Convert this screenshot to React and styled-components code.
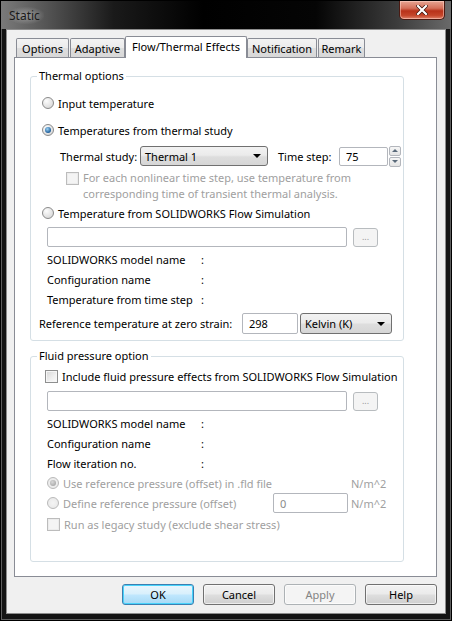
import styled, { createGlobalStyle, css } from "styled-components";

const GlobalStyle = createGlobalStyle`
  html, body { margin: 0; padding: 0; }
  body {
    font-family: "Noto Sans", "Open Sans", sans-serif;
    font-size: 11px;
    color: #000;
  }
  #root { width: 452px; height: 621px; }
`;

const Window = styled.div`
  width: 452px;
  height: 621px;
  box-sizing: border-box;
  display: flex;
  flex-direction: column;
  background: #141414;
  border: 1px solid #000;
  box-shadow: inset 0 0 0 1px #5e5e5e;
`;

const TitleBar = styled.div`
  height: 28px;
  display: flex;
  align-items: flex-start;
  justify-content: space-between;
  background: linear-gradient(
    90deg,
    #7a7a7a 0%,
    #555 10%,
    #1a1a1a 25%,
    #000 45%,
    #050505 70%,
    #3c3c3c 88%,
    #6a6a6a 100%
  );
`;

const Title = styled.span`
  margin: 6px 0 0 7px;
  padding: 0 4px 0 1px;
  font-size: 12px;
  color: #1a1a1a;
  border-radius: 6px;
  background: radial-gradient(ellipse at center, rgba(200, 200, 200, 0.55) 0%, rgba(160, 160, 160, 0) 75%);
`;

const CloseButton = styled.div`
  width: 46px;
  height: 19px;
  margin-right: 6px;
  box-sizing: border-box;
  display: flex;
  align-items: center;
  justify-content: center;
  border: 1px solid #4a1a12;
  border-top: none;
  border-radius: 0 0 5px 5px;
  background: linear-gradient(#e7a593 0%, #d4705a 40%, #b8321a 55%, #c4452a 80%, #e0826a 100%);
  box-shadow: inset 0 0 0 1px rgba(255, 220, 210, 0.5);
`;

const Client = styled.div`
  flex: 1;
  margin: 0 5px 6px 5px;
  border: 1px solid #8d8d8d;
  background: #f0f0f0;
  padding: 6px 8px 8px 7px;
  display: flex;
  flex-direction: column;
`;

const TabStrip = styled.div`
  height: 21px;
  display: flex;
  align-items: flex-end;
  padding-left: 2px;
  position: relative;
  z-index: 1;
`;

const Tab = styled.div`
  box-sizing: border-box;
  width: ${(p) => p.$w}px;
  height: 19px;
  margin-right: 1px;
  display: flex;
  align-items: center;
  justify-content: center;
  border: 1px solid #898c95;
  border-bottom: none;
  border-radius: 2px 2px 0 0;
  background: linear-gradient(#f3f3f3 0%, #ebebeb 50%, #dedede 51%, #d8d8d8 100%);
  ${(p) =>
    p.$active &&
    css`
      height: 22px;
      margin-bottom: -1px;
      margin-left: -1px;
      margin-right: 0;
      background: #fff;
      padding-bottom: 3px;
    `}
`;

const Panel = styled.div`
  box-sizing: border-box;
  height: 520px;
  width: 423px;
  border: 1px solid #898c95;
  background: #fff;
  padding: 11px 32px 0 15px;
  display: flex;
  flex-direction: column;
  gap: 8px;
`;

const Group = styled.fieldset`
  margin: 0;
  padding: 0 0 ${(p) => p.$pb}px 0;
  border: 1px solid #d5dfe5;
  border-radius: 3px;
  display: flex;
  flex-direction: column;
  min-width: 0;
`;

const Legend = styled.legend`
  margin-left: 6px;
  padding: 0 2px;
  line-height: 14px;
  font-size: 11px;
`;

const Row = styled.div`
  height: ${(p) => p.$h || 20}px;
  margin-top: ${(p) => p.$mt || 0}px;
  padding-left: ${(p) => p.$pl || 0}px;
  display: flex;
  align-items: center;
  color: ${(p) => (p.$disabled ? "#a0a0a0" : "#000")};
  white-space: nowrap;
`;

const Label = styled.span`
  width: ${(p) => (p.$w ? `${p.$w}px` : "auto")};
  margin-left: ${(p) => p.$ml || 0}px;
  flex: none;
`;

const RadioDot = styled.span`
  box-sizing: border-box;
  width: 12px;
  height: 12px;
  margin-right: 4px;
  flex: none;
  border-radius: 50%;
  border: 1px solid ${(p) => (p.$disabled ? "#b9b9b9" : "#8a8a8a")};
  background: ${(p) =>
    p.$disabled
      ? "radial-gradient(circle at 50% 50%, #f4f4f4 0%, #e6e6e6 100%)"
      : "radial-gradient(circle at 35% 30%, #fdfdfd 0%, #e2e2e2 60%, #cfcfcf 100%)"};
  display: flex;
  align-items: center;
  justify-content: center;
  &::after {
    content: "";
    display: ${(p) => (p.$checked ? "block" : "none")};
    width: 6px;
    height: 6px;
    border-radius: 50%;
    background: ${(p) =>
      p.$disabled
        ? "radial-gradient(circle at 40% 35%, #d8d8d8, #9a9a9a)"
        : "radial-gradient(circle at 40% 35%, #9fd4f5, #1c5d9a 70%, #123f6e)"};
  }
`;

const Check = styled.span`
  box-sizing: border-box;
  width: 13px;
  height: 13px;
  margin-right: 4px;
  margin-top: ${(p) => p.$mt || 0}px;
  flex: none;
  border: 1px solid ${(p) => (p.$disabled ? "#bcbcbc" : "#8e8f8f")};
  background: ${(p) =>
    p.$disabled ? "#f4f4f4" : "linear-gradient(135deg, #d6d6d6 0%, #f0f0f0 60%, #fafafa 100%)"};
  box-shadow: inset 0 0 0 1px ${(p) => (p.$disabled ? "#ececec" : "#f6f6f6")};
`;

const Input = styled.div`
  box-sizing: border-box;
  width: ${(p) => p.$w}px;
  height: ${(p) => p.$h || 20}px;
  flex: none;
  border: 1px solid #b3b6bc;
  border-radius: 2px;
  background: #fff;
  padding-left: 6px;
  display: flex;
  align-items: center;
  color: ${(p) => (p.$disabled ? "#8a8a8a" : "#000")};
`;

const Browse = styled.div`
  box-sizing: border-box;
  width: 25px;
  height: 19px;
  margin-left: 6px;
  border: 1px solid #b8bcbf;
  border-radius: 3px;
  background: #f4f4f4;
  color: #9a9a9a;
  font-size: 9px;
  display: flex;
  align-items: center;
  justify-content: center;
  padding-bottom: 2px;
`;

const Select = styled.div`
  box-sizing: border-box;
  width: ${(p) => p.$w}px;
  height: ${(p) => p.$h || 20}px;
  flex: none;
  margin-left: ${(p) => p.$ml || 0}px;
  border: 1px solid #707070;
  border-radius: 3px;
  background: linear-gradient(#f2f2f2 0%, #ebebeb 45%, #dddddd 55%, #d6d6d6 100%);
  display: flex;
  align-items: center;
  justify-content: space-between;
  padding: 0 6px 0 4px;
`;

const Arrow = styled.span`
  width: 0;
  height: 0;
  border-left: 4px solid transparent;
  border-right: 4px solid transparent;
  border-top: 4px solid #000;
`;

const Spinner = styled.div`
  display: flex;
  flex-direction: column;
  gap: 1px;
  margin-left: 1px;
`;

const SpinBtn = styled.div`
  box-sizing: border-box;
  width: 12px;
  height: 10px;
  border: 1px solid #b3b6bc;
  border-radius: 2px;
  background: linear-gradient(#f6f6f6, #e4e4e4);
  display: flex;
  align-items: center;
  justify-content: center;
  &::after {
    content: "";
    border-left: 3px solid transparent;
    border-right: 3px solid transparent;
    ${(p) =>
      p.$up ? "border-bottom: 3px solid #5a6a7a;" : "border-top: 3px solid #5a6a7a;"}
  }
`;

const Wrap = styled.div`
  padding-left: ${(p) => p.$pl}px;
  margin-top: ${(p) => p.$mt}px;
  display: flex;
  align-items: flex-start;
  color: #a0a0a0;
  line-height: 16px;
`;

const Unit = styled.span`
  margin-left: ${(p) => p.$ml}px;
  color: #a0a0a0;
`;

const ButtonBar = styled.div`
  margin-top: 7px;
  display: flex;
  justify-content: flex-end;
  gap: 9px;
`;

const Button = styled.div`
  box-sizing: border-box;
  width: 72px;
  height: 21px;
  display: flex;
  align-items: center;
  justify-content: center;
  border-radius: 3px;
  border: 1px solid ${(p) => (p.$primary ? "#3c7fb1" : p.$disabled ? "#adb2b5" : "#707070")};
  color: ${(p) => (p.$disabled ? "#838383" : "#000")};
  background: ${(p) =>
    p.$primary
      ? "linear-gradient(#eaf6fd 0%, #d9f0fc 45%, #bee6fd 55%, #a7d9f5 100%)"
      : p.$disabled
      ? "#f4f4f4"
      : "linear-gradient(#f2f2f2 0%, #ebebeb 45%, #dddddd 55%, #cfcfcf 100%)"};
  box-shadow: ${(p) => (p.$primary ? "inset 0 0 0 1px #48d3fb" : "inset 0 0 0 1px rgba(255,255,255,0.6)")};
`;

const tabs = [
  { label: "Options", w: 53 },
  { label: "Adaptive", w: 55 },
  { label: "Flow/Thermal Effects", w: 122, active: true },
  { label: "Notification", w: 70 },
  { label: "Remark", w: 47 },
];

const Radio = ({ checked, disabled, children, pl, mt }) => (
  <Row $pl={pl} $mt={mt} $disabled={disabled}>
    <RadioDot $checked={checked} $disabled={disabled} />
    {children}
  </Row>
);

const InfoRow = ({ label, mt }) => (
  <Row $pl={16} $mt={mt}>
    <Label $w={154}>{label}</Label>
    <span>:</span>
  </Row>
);

const App = () => {
  return (
    <>
      <GlobalStyle />
      <Window>
        <TitleBar>
          <Title>Static</Title>
          <CloseButton>
            <svg width="12" height="10" viewBox="0 0 12 10">
              <path d="M2 1 L10 9 M10 1 L2 9" stroke="#3a1008" strokeWidth="3.6" strokeLinecap="square" />
              <path d="M2 1 L10 9 M10 1 L2 9" stroke="#fff" strokeWidth="2.2" strokeLinecap="square" />
            </svg>
          </CloseButton>
        </TitleBar>
        <Client>
          <TabStrip>
            {tabs.map((t) => (
              <Tab key={t.label} $w={t.w} $active={t.active}>
                {t.label}
              </Tab>
            ))}
          </TabStrip>
          <Panel>
            <Group $pb={6}>
              <Legend>Thermal options</Legend>
              <Radio pl={11} mt={10}>Input temperature</Radio>
              <Radio pl={11} mt={7} checked>
                Temperatures from thermal study
              </Radio>
              <Row $pl={29} $mt={6}>
                <Label $w={80}>Thermal study:</Label>
                <Select $w={128}>
                  <span>Thermal 1</span>
                  <Arrow />
                </Select>
                <Label $w={61} $ml={10}>Time step:</Label>
                <Input $w={49} $h={19}>75</Input>
                <Spinner>
                  <SpinBtn $up />
                  <SpinBtn />
                </Spinner>
              </Row>
              <Wrap $pl={35} $mt={4}>
                <Check $disabled $mt={2} />
                <span>
                  For each nonlinear time step, use temperature from
                  <br />
                  corresponding time of transient thermal analysis.
                </span>
              </Wrap>
              <Radio pl={11} mt={1}>
                Temperature from SOLIDWORKS Flow Simulation
              </Radio>
              <Row $pl={16} $mt={4}>
                <Input $w={300} />
                <Browse>...</Browse>
              </Row>
              <InfoRow label="SOLIDWORKS model name" mt={2} />
              <InfoRow label="Configuration name" />
              <InfoRow label="Temperature from time step" />
              <Row $pl={8} $mt={4} $h={21}>
                <Label $w={203}>Reference temperature at zero strain:</Label>
                <Input $w={56} $h={21}>298</Input>
                <Select $w={92} $h={21} $ml={2}>
                  <span>Kelvin (K)</span>
                  <Arrow />
                </Select>
              </Row>
            </Group>
            <Group $pb={27}>
              <Legend>Fluid pressure option</Legend>
              <Row $pl={14} $mt={3}>
                <Check />
                Include fluid pressure effects from SOLIDWORKS Flow Simulation
              </Row>
              <Row $pl={16} $mt={5}>
                <Input $w={300} />
                <Browse>...</Browse>
              </Row>
              <InfoRow label="SOLIDWORKS model name" mt={2} />
              <InfoRow label="Configuration name" />
              <InfoRow label="Flow iteration no." />
              <Radio pl={16} checked disabled>
                <Label $w={210}>Use reference pressure (offset) in .fld file</Label>
                <Unit $ml={78}>N/m^2</Unit>
              </Radio>
              <Radio pl={16} disabled>
                <Label $w={210}>Define reference pressure (offset)</Label>
                <Input $w={75} $disabled>0</Input>
                <Unit $ml={3}>N/m^2</Unit>
              </Radio>
              <Row $pl={16} $mt={1} $disabled>
                <Check $disabled />
                Run as legacy study (exclude shear stress)
              </Row>
            </Group>
          </Panel>
          <ButtonBar>
            <Button $primary>OK</Button>
            <Button>Cancel</Button>
            <Button $disabled>Apply</Button>
            <Button>Help</Button>
          </ButtonBar>
        </Client>
      </Window>
    </>
  );
};

export default App;
